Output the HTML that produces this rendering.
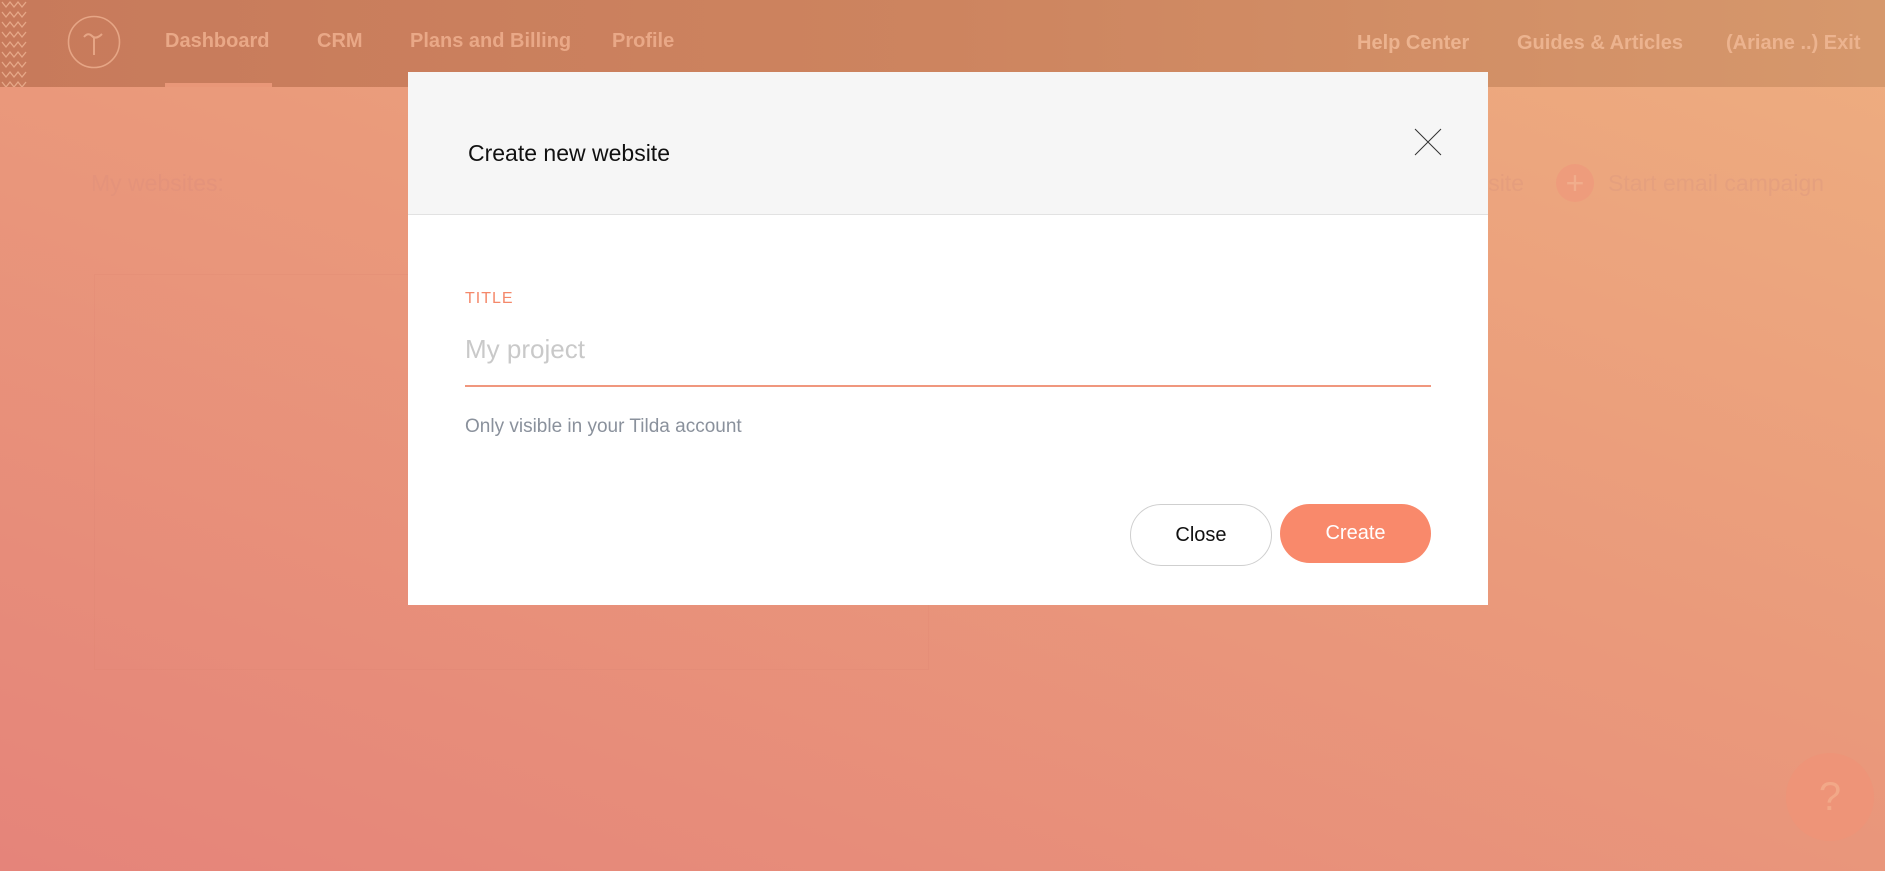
<!DOCTYPE html>
<html><head><meta charset="utf-8"><style>
*{margin:0;padding:0;box-sizing:border-box}
body{width:1885px;height:871px;overflow:hidden;position:relative;font-family:"Liberation Sans",sans-serif;
background:linear-gradient(200deg,#eeae80 0%,#ea9a7b 45%,#e5847a 100%)}
.nav{position:absolute;left:0;top:0;width:1885px;height:87px;background:linear-gradient(90deg,#c77a5b 0%,#cd845f 50%,#d6986c 100%)}
.n{position:absolute;top:30px;font-size:20px;font-weight:bold;color:#e9a887;white-space:nowrap}
.a{position:absolute;font-size:23px;white-space:nowrap}
.modal{position:absolute;left:408px;top:72px;width:1080px;height:533px;background:#fff}
.mh{height:143px;background:#f6f6f6;border-bottom:1px solid #e2e2e2;position:relative}
</style></head><body>
<div class="nav">
<svg style="position:absolute;left:0;top:0" width="30" height="87"><g fill="none" stroke="#e6a888" stroke-width="1.3">
<path d="M2 2 l4 5 4-5 4 5 4-5 4 5 4-5 M2 12 l4 5 4-5 4 5 4-5 4 5 4-5 M2 22 l4 5 4-5 4 5 4-5 4 5 4-5 M2 32 l4 5 4-5 4 5 4-5 4 5 4-5 M2 42 l4 5 4-5 4 5 4-5 4 5 4-5 M2 52 l4 5 4-5 4 5 4-5 4 5 4-5 M2 62 l4 5 4-5 4 5 4-5 4 5 4-5 M2 72 l4 5 4-5 4 5 4-5 4 5 4-5 M2 82 l4 5 4-5 4 5 4-5 4 5 4-5"/></g></svg>
<svg style="position:absolute;left:67px;top:15px" width="54" height="54"><circle cx="27" cy="27" r="25.5" fill="none" stroke="#e6a585" stroke-width="1.6"/><path d="M17 22 q4 -5 8 -1 q4 4 10 -2 M27 22 V40" fill="none" stroke="#e6a585" stroke-width="2"/></svg>
<div class="n" style="left:165px">Dashboard</div>
<div style="position:absolute;left:165px;top:83px;width:107px;height:4px;background:#e99778"></div>
<div class="n" style="left:317px">CRM</div>
<div class="n" style="left:410px">Plans and Billing</div>
<div class="n" style="left:612px">Profile</div>
<div class="n" style="left:1357px;top:32px;color:#ecb38f">Help Center</div>
<div class="n" style="left:1517px;top:32px;color:#ecb38f">Guides &amp; Articles</div>
<div class="n" style="left:1726px;top:32px;color:#ecb38f">(Ariane ..) Exit</div>
</div>
<div class="a" style="left:91px;top:170px;color:#e4937b">My websites:</div>
<div class="a" style="right:361px;top:170px;color:#e59e7d">Create new website</div>
<div style="position:absolute;left:1556px;top:164px;width:38px;height:38px;border-radius:50%;background:#ee9c7c;color:#f1ad8c;font-size:32px;line-height:38px;text-align:center">+</div>
<div class="a" style="left:1608px;top:170px;color:#e5a07e">Start email campaign</div>
<div style="position:absolute;left:94px;top:274px;width:835px;height:396px;border:1px solid rgba(220,130,110,.2)"></div>
<div style="position:absolute;left:1786px;top:753px;width:88px;height:88px;border-radius:50%;background:#ee9478;color:#f2a888;font-size:40px;text-align:center;line-height:88px">?</div>
<div class="modal">
<div class="mh">
<div style="position:absolute;left:60px;top:68px;font-size:23px;color:#111">Create new website</div>
<svg style="position:absolute;left:1006px;top:56px" width="28" height="28"><path d="M1 1 L27 27 M27 1 L1 27" stroke="#333" stroke-width="1"/></svg>
</div>
<div style="position:absolute;left:57px;top:218px;font-size:16px;letter-spacing:1px;color:#f4886a">TITLE</div>
<div style="position:absolute;left:57px;top:262px;font-size:26px;color:#c9c9c9">My project</div>
<div style="position:absolute;left:57px;top:313px;width:966px;height:2px;background:#f0977e"></div>
<div style="position:absolute;left:57px;top:344px;font-size:19px;color:#8a919c">Only visible in your Tilda account</div>
<div style="position:absolute;left:722px;top:432px;width:142px;height:62px;border:1px solid #cfcfcf;border-radius:31px;text-align:center;line-height:60px;font-size:20px;color:#111">Close</div>
<div style="position:absolute;left:872px;top:432px;width:151px;height:59px;background:#f9896b;border-radius:30px;text-align:center;line-height:59px;font-size:20px;color:#fff">Create</div>
</div>
</body></html>
